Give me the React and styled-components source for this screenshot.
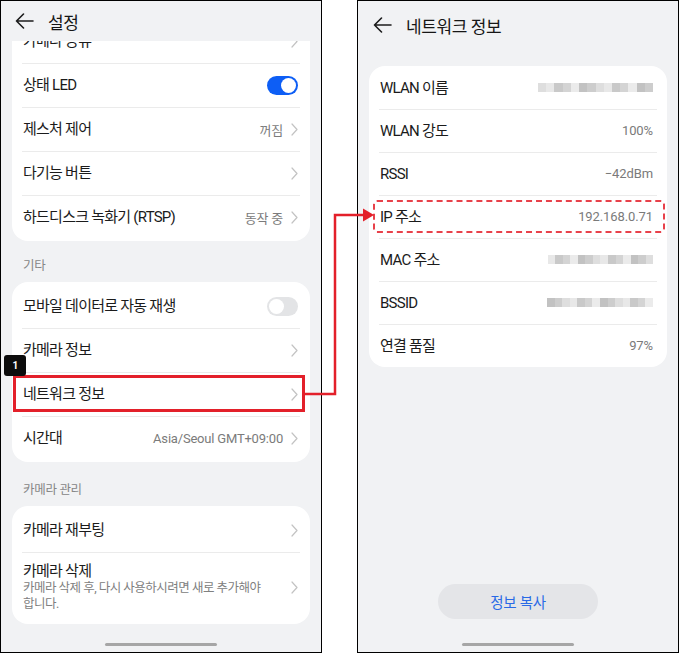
import React from 'react'
import styled, { createGlobalStyle } from 'styled-components'

const GlobalStyle = createGlobalStyle`
  html, body { margin: 0; padding: 0; background: #ffffff; }
  * { box-sizing: border-box; }
`

const FONT = `Roboto, "Noto Sans CJK KR", "Noto Sans", sans-serif`
const RED = '#e3202a'

const Canvas = styled.div`
  position: relative;
  width: 680px;
  height: 654px;
  display: flex;
  gap: 35px;
  font-family: ${FONT};
  color: #1b1b1b;
`

const Phone = styled.div`
  width: 322px;
  height: 653px;
  border: 1px solid #000;
  background: #f1f2f4;
  display: flex;
  flex-direction: column;
  overflow: hidden;
`

const Header = styled.div`
  height: ${p => p.$h}px;
  flex-shrink: 0;
  display: flex;
  align-items: center;
  gap: 14px;
  padding: 0 0 ${p => p.$pb || 0}px ${p => p.$pl}px;
  position: relative;
  z-index: 2;
  background: #f1f2f4;
`

const Title = styled.div`
  font-size: 17px;
  letter-spacing: -0.4px;
  color: #161616;
`

const Scroll = styled.div`
  flex: 1;
  overflow: hidden;
`

const ScrollInner = styled.div`
  margin-top: -24px;
  padding: 0 11px;
`

const Card = styled.div`
  background: #fff;
  border-radius: 16px;
  padding: ${p => p.$pad || 0}px 0;
  margin: ${p => p.$mt || 0}px ${p => p.$mx || 0}px 0;
`

const SectionLabel = styled.div`
  padding: ${p => p.$pt || 20}px 0 8px 11px;
  font-size: 12.5px;
  line-height: 16px;
  color: #868686;
  letter-spacing: -0.3px;
`

const Row = styled.div`
  position: relative;
  display: flex;
  align-items: center;
  justify-content: space-between;
  min-height: ${p => p.$h || 44}px;
  padding: ${p => p.$py || 0}px ${p => p.$pr || 12}px ${p => p.$py || 0}px 11px;
  font-size: 15px;
  letter-spacing: -0.75px;

  &:not(:first-child)::before {
    content: '';
    position: absolute;
    top: 0;
    left: 10px;
    right: 10px;
    height: 1px;
    background: #ebebeb;
  }

  ${p => p.$solid && `
    &::after {
      content: '';
      position: absolute;
      top: 3px; left: 1px; right: 5px; bottom: 4px;
      border: 3px solid ${RED};
    }
  `}

  ${p => p.$dashed && `
    &::after {
      content: '';
      position: absolute;
      top: 5px; left: 4px; right: 2px; bottom: 5px;
      border: 2px dashed #e8414a;
      border-radius: 4px;
    }
  `}
`

const Label = styled.div`
  color: #1b1b1b;
  line-height: 18px;
`

const Stack = styled.div`
  display: flex;
  flex-direction: column;
  width: 244px;
`

const Sub = styled.div`
  font-size: 12.5px;
  line-height: 16px;
  letter-spacing: -0.5px;
  color: #808080;
`

const Trail = styled.div`
  display: flex;
  align-items: center;
  gap: 8px;
  font-size: 13px;
  letter-spacing: -0.2px;
  color: #7b7b7b;
`

const Value = styled.div`
  font-size: 13px;
  letter-spacing: -0.1px;
  color: #7a7a7a;
`

const Toggle = styled.div`
  width: 31px;
  height: 19px;
  border-radius: 10px;
  background: ${p => (p.$on ? '#0d5ef5' : '#e3e4e6')};
  position: relative;

  &::after {
    content: '';
    position: absolute;
    top: 2px;
    left: ${p => (p.$on ? '14px' : '2px')};
    width: 15px;
    height: 15px;
    border-radius: 50%;
    background: #fff;
  }
`

const Badge = styled.div`
  position: absolute;
  left: -8px;
  top: -17px;
  width: 22px;
  height: 21px;
  border-radius: 3px;
  background: #0c0c0c;
  color: #fff;
  font: 700 10px/21px Roboto, sans-serif;
  text-align: center;
  z-index: 3;
`

const Mosaic = styled.div`
  width: ${p => p.$w}px;
  height: 9px;
  filter: blur(0.6px);
  background: linear-gradient(90deg, ${p => p.$stops});
`

const Spacer = styled.div`
  flex: 1;
`

const CopyButton = styled.div`
  align-self: center;
  width: 160px;
  height: 35px;
  border-radius: 18px;
  background: #e4e5e8;
  color: #2a6ae6;
  font-size: 14.5px;
  letter-spacing: -0.3px;
  display: flex;
  align-items: center;
  justify-content: center;
  margin-bottom: 17px;
`

const HomeBar = styled.div`
  height: 16px;
  flex-shrink: 0;
  display: flex;
  align-items: center;
  justify-content: center;

  &::after {
    content: '';
    width: 112px;
    height: 3px;
    border-radius: 2px;
    background: #a6a6a6;
  }
`

const Connector = styled.svg`
  position: absolute;
  left: 0;
  top: 0;
  pointer-events: none;
  z-index: 5;
`

const BackArrow = () => (
  <svg width="19" height="16" viewBox="0 0 19 16" fill="none">
    <path d="M18 8H1.5M8.5 1L1.5 8l7 7" stroke="#1c1c1c" strokeWidth="1.6" strokeLinecap="round" strokeLinejoin="round" />
  </svg>
)

const Chevron = () => (
  <svg width="7" height="13" viewBox="0 0 7 13" fill="none">
    <path d="M1 1l5 5.5L1 12" stroke="#c3c3c3" strokeWidth="1.2" strokeLinecap="round" strokeLinejoin="round" />
  </svg>
)

function mosaic(seed) {
  const tones = ['#c9c9c9', '#dedede', '#c2c2c2', '#d4d4d4', '#e8e8e8', '#cdcdcd', '#ebebeb']
  const out = []
  let step = 0
  for (let i = 0; i < 14; i++) {
    const c = tones[(i * 3 + seed) % tones.length]
    const next = step + 100 / 14
    out.push(`${c} ${step.toFixed(1)}%`, `${c} ${next.toFixed(1)}%`)
    step = next
  }
  return out.join(', ')
}

const networkRows = [
  { label: 'WLAN 이름', blur: 115, seed: 1 },
  { label: 'WLAN 강도', value: '100%' },
  { label: 'RSSI', value: '−42dBm' },
  { label: 'IP 주소', value: '192.168.0.71', dashed: true },
  { label: 'MAC 주소', blur: 105, seed: 4 },
  { label: 'BSSID', blur: 106, seed: 2 },
  { label: '연결 품질', value: '97%' },
]

export default function App() {
  return (
    <>
      <GlobalStyle />
      <Canvas>
        <Phone>
          <Header $h={40} $pl={14}>
            <BackArrow />
            <Title>설정</Title>
          </Header>
          <Scroll>
            <ScrollInner>
              <Card $pad={2}>
                <Row><Label>카메라 공유</Label><Chevron /></Row>
                <Row><Label>상태 LED</Label><Toggle $on /></Row>
                <Row><Label>제스처 제어</Label><Trail>꺼짐<Chevron /></Trail></Row>
                <Row><Label>다기능 버튼</Label><Chevron /></Row>
                <Row><Label>하드디스크 녹화기 (RTSP)</Label><Trail>동작 중<Chevron /></Trail></Row>
              </Card>

              <SectionLabel $pt={17}>기타</SectionLabel>
              <Card $pad={2}>
                <Row><Label>모바일 데이터로 자동 재생</Label><Toggle /></Row>
                <Row><Label>카메라 정보</Label><Chevron /></Row>
                <Row $solid>
                  <Badge>1</Badge>
                  <Label>네트워크 정보</Label><Chevron />
                </Row>
                <Row><Label>시간대</Label><Trail>Asia/Seoul GMT+09:00<Chevron /></Trail></Row>
              </Card>

              <SectionLabel>카메라 관리</SectionLabel>
              <Card $pad={2}>
                <Row><Label>카메라 재부팅</Label><Chevron /></Row>
                <Row $py={8} $h={70}>
                  <Stack>
                    <Label>카메라 삭제</Label>
                    <Sub>카메라 삭제 후, 다시 사용하시려면 새로 추가해야 합니다.</Sub>
                  </Stack>
                  <Chevron />
                </Row>
              </Card>
            </ScrollInner>
          </Scroll>
          <HomeBar />
        </Phone>

        <Phone>
          <Header $h={50} $pl={15} $pb={2}>
            <BackArrow />
            <Title>네트워크 정보</Title>
          </Header>
          <Card $mt={15} $mx={11}>
            {networkRows.map(r => (
              <Row key={r.label} $h={43} $pr={14} $dashed={r.dashed}>
                <Label>{r.label}</Label>
                {r.blur ? <Mosaic $w={r.blur} $stops={mosaic(r.seed)} /> : <Value>{r.value}</Value>}
              </Row>
            ))}
          </Card>
          <Spacer />
          <CopyButton>정보 복사</CopyButton>
          <HomeBar />
        </Phone>

        <Connector width="680" height="654" viewBox="0 0 680 654">
          <path d="M305 394H335V215H364" stroke={RED} strokeWidth="2.5" fill="none" />
          <polygon points="363,208.5 374,215 363,221.5" fill={RED} />
        </Connector>
      </Canvas>
    </>
  )
}
